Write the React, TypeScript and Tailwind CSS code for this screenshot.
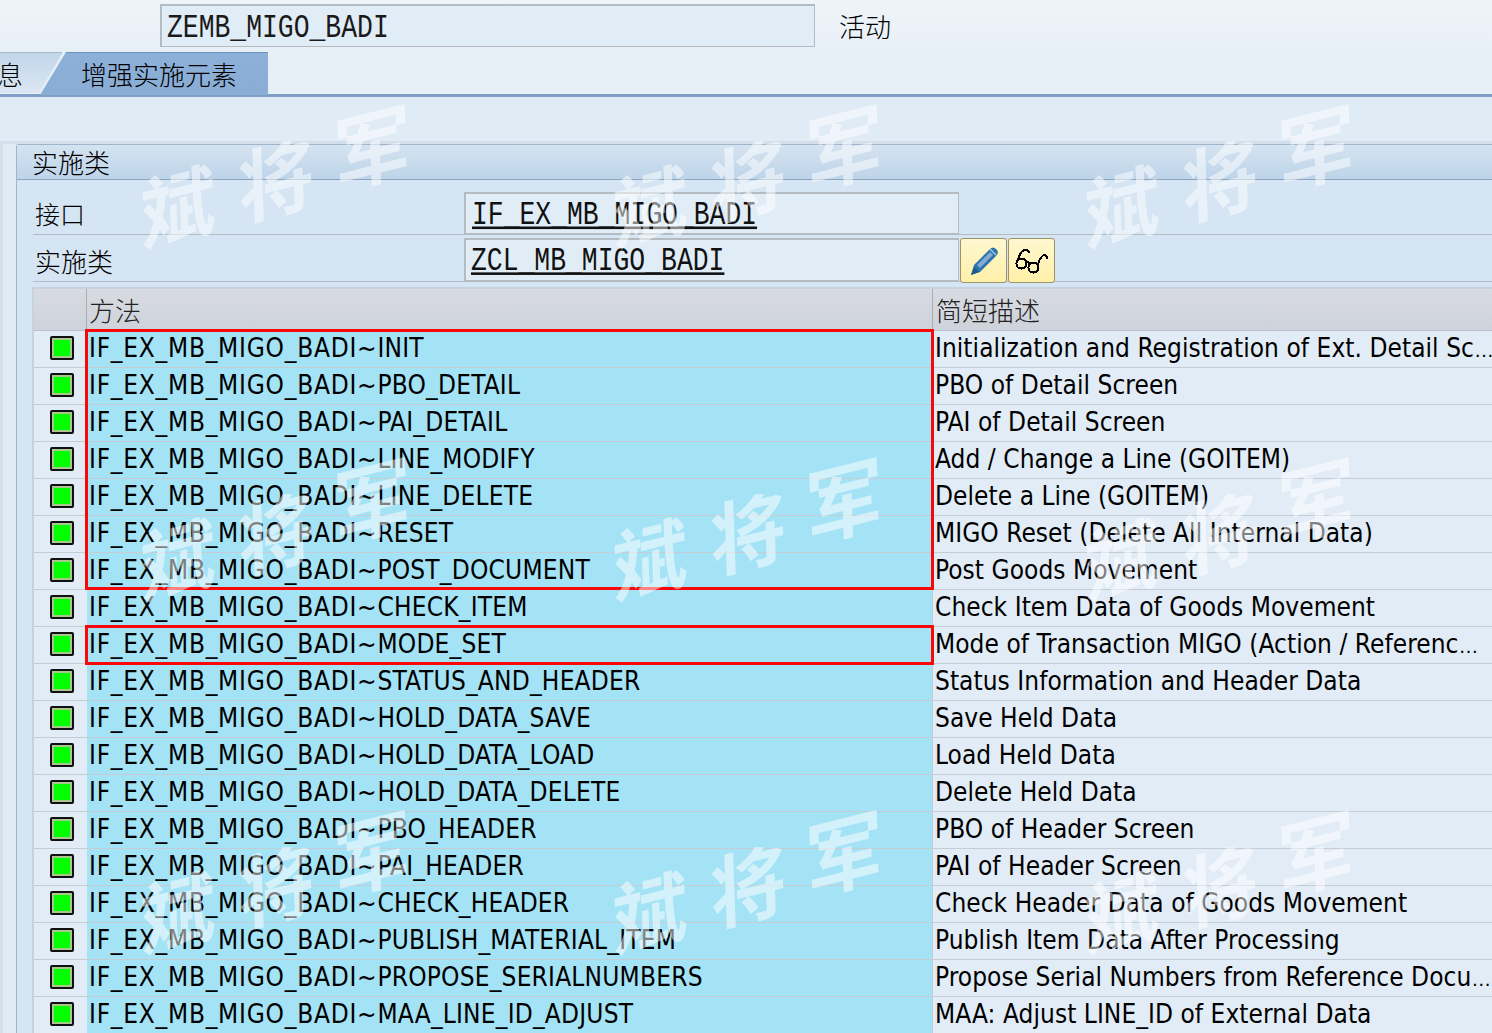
const rows: [string, string][] = [
  ["INIT", "Initialization and Registration of Ext. Detail Sc…"],
  ["PBO_DETAIL", "PBO of Detail Screen"],
  ["PAI_DETAIL", "PAI of Detail Screen"],
  ["LINE_MODIFY", "Add / Change a Line (GOITEM)"],
  ["LINE_DELETE", "Delete a Line (GOITEM)"],
  ["RESET", "MIGO Reset (Delete All Internal Data)"],
  ["POST_DOCUMENT", "Post Goods Movement"],
  ["CHECK_ITEM", "Check Item Data of Goods Movement"],
  ["MODE_SET", "Mode of Transaction MIGO (Action / Referenc…"],
  ["STATUS_AND_HEADER", "Status Information and Header Data"],
  ["HOLD_DATA_SAVE", "Save Held Data"],
  ["HOLD_DATA_LOAD", "Load Held Data"],
  ["HOLD_DATA_DELETE", "Delete Held Data"],
  ["PBO_HEADER", "PBO of Header Screen"],
  ["PAI_HEADER", "PAI of Header Screen"],
  ["CHECK_HEADER", "Check Header Data of Goods Movement"],
  ["PUBLISH_MATERIAL_ITEM", "Publish Item Data After Processing"],
  ["PROPOSE_SERIALNUMBERS", "Propose Serial Numbers from Reference Docu…"],
  ["MAA_LINE_ID_ADJUST", "MAA: Adjust LINE_ID of External Data"],
];

const cjk = "font-['Noto_Sans_CJK_SC',sans-serif] font-light";
const mono = "inline-block scale-y-[1.28] text-[26.4px] font-['Liberation_Mono','Noto_Sans_CJK_SC',monospace]";
const inputBox = "border border-[#b4bcc2] border-t-2 border-l-2 bg-[#e0ecf6]";

function Lamp() {
  return (
    <div className="-mt-[2px] w-[24px] h-[24px] border-[2px] border-[#101010] rounded-[2px] bg-[#00ff00] shadow-[inset_0_0_0_2px_#a8c890]" />
  );
}

function Pencil() {
  return (
    <svg width="30" height="30" viewBox="0 0 30 30">
      <path d="M2 29 L5 19 L21 3 Q24 0 27 3 L28 4 Q30 7 27 10 L11 26 Z" fill="#2a76aa" />
      <path d="M8 19 L21 6 L24 9 L11 22 Z" fill="#86a9d6" />
      <path d="M21 3 L27 9" stroke="#a9c4e2" strokeWidth="1.5" />
      <path d="M2 29 L5 21 L10 26 Z" fill="#1d5a88" />
    </svg>
  );
}

function Glasses() {
  return (
    <svg width="34" height="28" viewBox="0 0 34 28" fill="none" stroke="#000" strokeWidth="2" shapeRendering="crispEdges">
      <circle cx="6.5" cy="16.5" r="5" />
      <circle cx="18.5" cy="20.5" r="5" />
      <path d="M11 15 Q13 14 15 17" />
      <path d="M3 13 Q5 4 10 3 Q14 3 14 6" />
      <path d="M23 17 Q26 8 30 8 Q33 9 32 12" />
    </svg>
  );
}

function Desc({ text }: { text: string }) {
  if (!text.endsWith("…")) return <>{text}</>;
  return (
    <>
      {text.slice(0, -1)}
      <span className="font-['Liberation_Sans',sans-serif] text-[20px] tracking-[-1px]">…</span>
    </>
  );
}

const marks = [
  { ch: "斌", x: 178, y: 202, size: 76 },
  { ch: "将", x: 276, y: 176, size: 78 },
  { ch: "军", x: 372, y: 143, size: 80 },
];

function Watermark() {
  const items = [];
  for (let c = 0; c < 3; c++) {
    for (let r = 0; r < 3; r++) {
      for (const m of marks) {
        items.push(
          <span
            key={`${c}-${r}-${m.ch}`}
            className="absolute font-['Noto_Sans_CJK_SC',sans-serif] font-bold text-white/50 leading-none -translate-x-1/2 -translate-y-1/2 -rotate-[14deg] -skew-x-12"
            style={{ left: m.x + c * 472, top: m.y + r * 353, fontSize: m.size }}
          >
            {m.ch}
          </span>
        );
      }
    }
  }
  return <div className="absolute inset-0 overflow-hidden pointer-events-none">{items}</div>;
}

export default function App() {
  return (
    <div className="relative w-[1492px] h-[1033px] overflow-hidden bg-[#e3edf5] text-black font-['DejaVu_Sans',sans-serif] [font-stretch:condensed]">
      {/* top field */}
      <div className="h-[52px] pl-[160px] pt-[4px] flex items-start bg-gradient-to-b from-[#eef4f9] to-[#e8f0f7]">
        <div className={`w-[655px] h-[43px] ${inputBox} pl-[5px] pt-[6px] flex items-center text-[#1a1a1a]`}>
          <span className={mono}>ZEMB_MIGO_BADI</span>
        </div>
        <div className={`ml-[24px] h-[43px] flex items-center text-[26px] ${cjk}`}>活动</div>
      </div>

      {/* tabs */}
      <div className="h-[45px] flex relative bg-[#e8f0f7] border-b-[3px] border-[#7f9fc6]">
        <div className="w-[62px] h-[41px] bg-gradient-to-b from-[#c2d6ea] to-[#dbe7f3] border-t border-[#a9b9c9] [clip-path:polygon(0_0,100%_0,100%_4%,63%_100%,0_100%)] text-[26px] leading-[41px] overflow-hidden">
          <span className={`block -ml-[3px] ${cjk}`}>息</span>
        </div>
        <div className="absolute left-[40px] top-0 w-[228px] h-[43px] border-t border-[#7094c0] bg-gradient-to-b from-[#8db0d9] to-[#8aadd5] [clip-path:polygon(26px_0,100%_0,100%_100%,0_100%)] pl-[41px] text-[26px] leading-[41px]">
          <span className={cjk}>增强实施元素</span>
        </div>
      </div>

      {/* toolbar */}
      <div className="h-[47px] bg-[#dfebf5] border-b-[3px] border-[#d3e0ec]" />

      {/* body */}
      <div className="flex">
        <div className="w-[16px] shrink-0 h-[900px] bg-[#dfebf5] border-l-[3px] border-[#d3e0ec]" />
        <div className="flex-1 bg-[#d5e5f3] border-l border-t border-[#a0b4cb] rounded-tl-[3px]">
          <div className="h-[35px] bg-gradient-to-b from-[#d5e3f1] to-[#bdd4e9] border-b border-[#8da4c0] pl-[15px] text-[26px] leading-[33px]">
            <span className={cjk}>实施类</span>
          </div>

          <div className="pl-[16px] pr-[1px] pt-[12px]">
            <div className="h-[43px] flex border-b border-[#b4bcc2]">
              <div className={`w-[431px] pl-[2px] text-[25px] leading-[43px] ${cjk}`}>接口</div>
              <div className={`w-[495px] h-[42px] ${inputBox} pl-[6px] leading-[42px] text-[#111]`}>
                <span className={`${mono} underline`}>IF_EX_MB_MIGO_BADI</span>
              </div>
            </div>
            <div className="h-[47px] flex border-b border-[#b4bcc2] pt-[3px]">
              <div className={`w-[431px] pl-[2px] text-[26px] leading-[45px] ${cjk}`}>实施类</div>
              <div className={`w-[495px] h-[43px] ${inputBox} pl-[5px] leading-[43px] text-[#111]`}>
                <span className={`${mono} underline`}>ZCL_MB_MIGO_BADI</span>
              </div>
              <button className="ml-[1px] w-[47px] h-[45px] rounded-[3px] border border-[#9c9468] bg-gradient-to-b from-[#fff8d0] to-[#ffefa8] flex items-center justify-center">
                <Pencil />
              </button>
              <button className="ml-[1px] w-[47px] h-[45px] rounded-[3px] border border-[#9c9468] bg-gradient-to-b from-[#fff8d0] to-[#ffefa8] flex items-center justify-center">
                <Glasses />
              </button>
            </div>

            {/* table */}
            <div className="relative mt-[5px] -ml-[1px] border-t-2 border-l-2 border-[#c6d2de]">
              <div className="h-[42px] flex bg-gradient-to-b from-[#d8dbe2] to-[#ced2da] border-b border-[#b8c2cc] text-[26px] leading-[42px] text-[#222]">
                <div className="w-[53px] border-r border-[#a9adb4]" />
                <div className={`w-[846px] pl-[2px] border-r border-[#a9adb4] ${cjk}`}>方法</div>
                <div className={`flex-1 pl-[3px] ${cjk}`}>简短描述</div>
              </div>
              {rows.map(([a, b]) => (
                <div key={a} className="h-[37px] flex text-[26px] leading-[35px] whitespace-nowrap border-b border-[#c4ccd4]">
                  <div className="w-[53px] shrink-0 bg-[#e1ecf6] flex items-center pl-[16px]">
                    <Lamp />
                  </div>
                  <div className="w-[846px] shrink-0 bg-[#a4e3f5] pl-[2px] border-r border-[#c4ccd4]">
                    <span className="tracking-[0.74px]">IF_EX_MB_MIGO_BADI~</span>
                    <span className="tracking-[0.2px]">{a}</span>
                  </div>
                  <div className="flex-1 bg-[#e1ecf6] pl-[2px] overflow-hidden tracking-[0.05px]">
                    <Desc text={b} />
                  </div>
                </div>
              ))}
              <div className="absolute left-[51px] top-[40px] w-[849px] h-[261px] border-[3px] border-[#f80808]" />
              <div className="absolute left-[51px] top-[336px] w-[849px] h-[40px] border-[3px] border-[#f80808]" />
            </div>
          </div>
        </div>
      </div>

      <Watermark />
    </div>
  );
}
